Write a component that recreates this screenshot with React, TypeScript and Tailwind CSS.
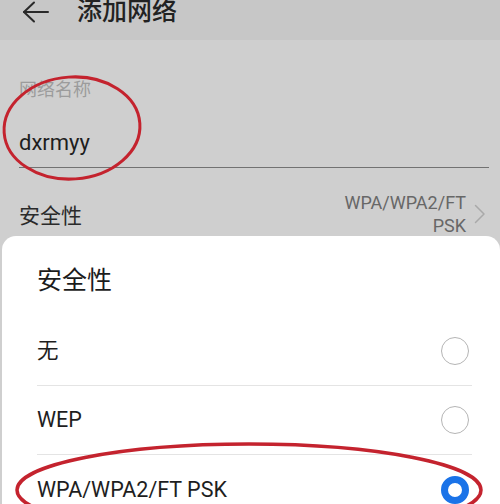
import React from 'react';

const cjk = '"Noto Sans CJK SC", sans-serif';
const latin = 'Roboto, "Noto Sans CJK SC", sans-serif';

function Radio({ checked }: { checked?: boolean }) {
  if (checked) {
    return <div className="w-[28px] h-[28px] rounded-full border-[7px] border-[#1a73e8] bg-white" />;
  }
  return <div className="w-[28px] h-[28px] rounded-full border-[1.5px] border-[#b5b5b5] bg-white" />;
}

const options = [
  { label: '无', checked: false },
  { label: 'WEP', checked: false },
  { label: 'WPA/WPA2/FT PSK', checked: true },
];

export default function App() {
  return (
    <div className="relative w-[500px] h-[504px] overflow-hidden bg-[#cfcfcf]">
      {/* Header */}
      <div className="h-[40px] bg-[#c7c7c7] flex items-start pl-[22px]">
        <svg width="27" height="22" viewBox="0 0 27 22" className="mt-[1px]" fill="none" stroke="#2a2a2a" strokeWidth="2" strokeLinecap="round" strokeLinejoin="round">
          <path d="M26 11H2" />
          <path d="M12 1.5 2 11l10 9.5" />
        </svg>
        <div className="ml-[28px] -mt-[3px] text-[25px] leading-[24px] font-medium text-[#222]" style={{ fontFamily: cjk }}>
          添加网络
        </div>
      </div>

      {/* Form */}
      <div className="pl-[19px] pr-[11px]">
        <div className="mt-[39px] text-[18px] leading-[18px] text-[#9c9c9c]" style={{ fontFamily: cjk }}>
          网络名称
        </div>
        <div className="border-b-[1.5px] border-[#727272] pb-[13px]">
          <div className="mt-[35px] text-[22px] leading-[22px] text-[#1e1e1e]" style={{ fontFamily: latin }}>
            dxrmyy
          </div>
        </div>
        <div className="mt-[23px] flex items-center justify-between pr-[3px]">
          <div className="text-[21px] leading-[22px] text-[#2a2a2a]" style={{ fontFamily: cjk }}>
            安全性
          </div>
          <div className="flex items-center">
            <div className="text-right text-[18px] leading-[23px] text-[#676767]" style={{ fontFamily: latin }}>
              <div>WPA/WPA2/FT</div>
              <div>PSK</div>
            </div>
            <svg width="12" height="20" viewBox="0 0 12 20" className="ml-[8px]" fill="none" stroke="#a9a9a9" strokeWidth="1.5" strokeLinecap="round" strokeLinejoin="round">
              <path d="M1.5 1.5 10 10l-8.5 8.5" />
            </svg>
          </div>
        </div>
      </div>

      {/* Bottom sheet */}
      <div className="absolute left-[2px] right-0 top-[236px] bottom-0 bg-white rounded-t-[14px] pl-[35px] pr-[28px] pt-[29px]">
        <div className="text-[25px] leading-[26px] text-[#1c1c1c]" style={{ fontFamily: cjk }}>
          安全性
        </div>
        <div className="mt-[26px]">
          {options.map((o, i) => (
            <div
              key={o.label}
              className={`h-[69px] flex items-center justify-between pr-[3px] ${i < options.length - 1 ? 'border-b border-[#e4e4e4]' : ''}`}
            >
              <div className="text-[21.5px] leading-[22px] text-[#1e1e1e]" style={{ fontFamily: latin }}>
                {o.label}
              </div>
              <Radio checked={o.checked} />
            </div>
          ))}
        </div>
      </div>

      {/* Red annotations */}
      <svg className="absolute inset-0 pointer-events-none" width="500" height="504" viewBox="0 0 500 504" fill="none">
        <ellipse cx="72" cy="128" rx="68" ry="51" stroke="#c4232e" strokeWidth="3" transform="rotate(-4 72 128)" />
        <ellipse cx="249" cy="490" rx="232" ry="46" stroke="#c4232e" strokeWidth="3.5" />
      </svg>
    </div>
  );
}
